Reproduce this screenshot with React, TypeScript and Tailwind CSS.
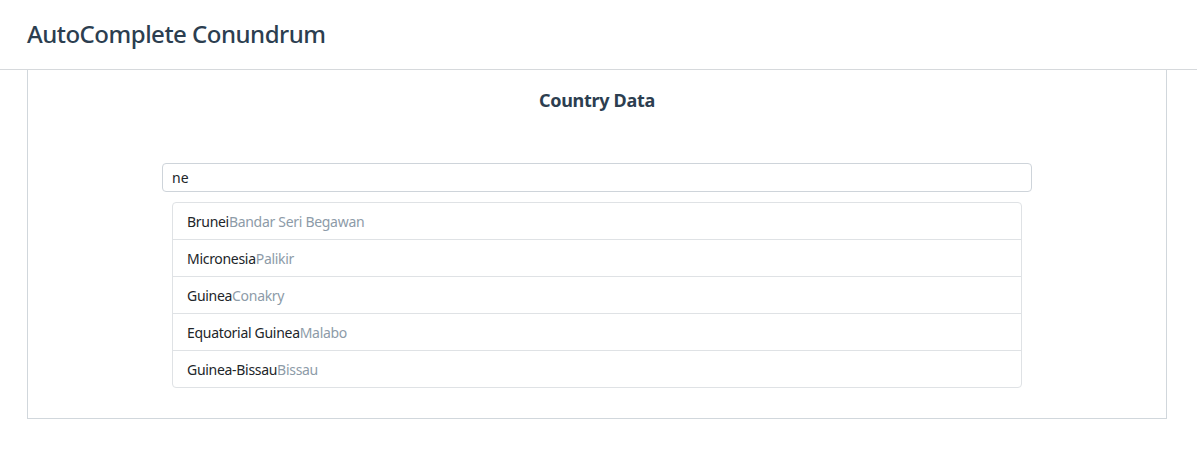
const countries = [
  { name: 'Brunei', capital: 'Bandar Seri Begawan' },
  { name: 'Micronesia', capital: 'Palikir' },
  { name: 'Guinea', capital: 'Conakry' },
  { name: 'Equatorial Guinea', capital: 'Malabo' },
  { name: 'Guinea-Bissau', capital: 'Bissau' },
]

export default function App() {
  return (
    <div className="min-h-screen bg-white text-[#2c3e50]" style={{ fontFamily: '"Noto Sans", sans-serif' }}>
      {/* header */}
      <div className="h-[70px] border-b border-[#d6d9dc] px-[27px] flex items-center">
        <h1 className="text-[24px] font-medium leading-none tracking-[-0.5px] pb-[1px]">AutoComplete Conundrum</h1>
      </div>

      {/* card */}
      <div className="mx-[27px] mr-[30px] border border-t-0 border-[#d1d7dc] pb-[30px]">
        <h2 className="pt-[19px] text-center text-[18px] font-bold leading-[22px] tracking-[-0.3px]">Country Data</h2>
        <div className="mt-[52px] px-[134px]">
          <input
            readOnly
            value="ne"
            className="block h-[29px] w-full rounded-[4px] border border-[#ced4da] px-[9px] text-[14px] text-[#212529] outline-none"
          />
          <ul className="mx-[10px] mt-[10px] rounded-[4px] border border-[#dfe2e5] divide-y divide-[#dfe2e5]">
            {countries.map((c) => (
              <li key={c.name} className="box-content h-[36px] flex items-center px-[14px] text-[14px] tracking-[-0.3px]">
                <span className="text-[#212529]">{c.name}</span>
                <span className="text-[#8d9ba8]">{c.capital}</span>
              </li>
            ))}
          </ul>
        </div>
      </div>
    </div>
  )
}
